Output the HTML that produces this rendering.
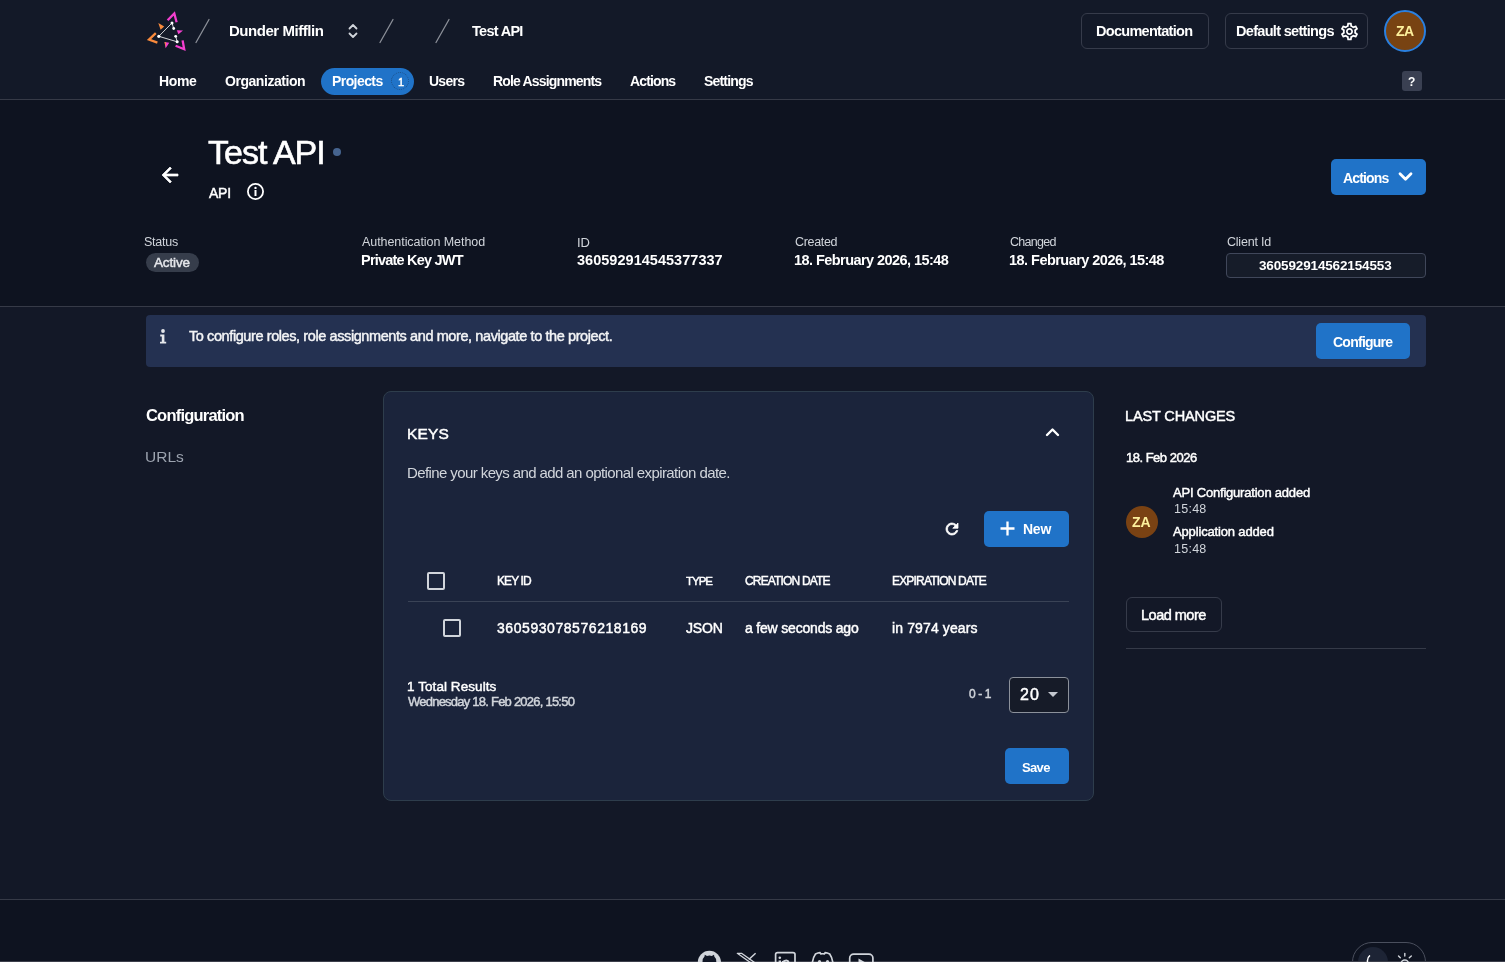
<!DOCTYPE html>
<html><head><meta charset="utf-8"><style>
*{box-sizing:border-box;margin:0;padding:0}
html,body{width:1505px;height:962px;overflow:hidden}
body{background:#0e1320;font-family:"Liberation Sans",sans-serif;color:#fff;position:relative}
.a{position:absolute}
.bo{position:absolute;border:1px solid #363b4a;border-radius:6px}
.pb{position:absolute;background:#2073c8;border-radius:5px}

.t{position:absolute;white-space:nowrap;will-change:transform}
</style></head><body style="">
<div class="a" style="left:0;top:0;width:1505px;height:99px;background:#131928"></div>
<div class="a" style="left:0;top:99px;width:1505px;height:1px;background:#363a47"></div>
<div class="a" style="left:0;top:307px;width:1505px;height:592px;background:#131827"></div>
<!-- breadcrumb slashes -->
<svg class="a" style="left:0;top:0" width="1505" height="60">
 <g stroke="#8b8f98" stroke-width="1.3" stroke-linecap="round">
  <line x1="209" y1="19.5" x2="196" y2="42.5"/>
  <line x1="393" y1="19.5" x2="380" y2="42.5"/>
  <line x1="449" y1="19.5" x2="436" y2="42.5"/>
 </g>
 <g stroke="#d1d5db" stroke-width="1.8" fill="none" stroke-linecap="round" stroke-linejoin="round">
  <polyline points="349.5,28.5 353,25 356.5,28.5"/>
  <polyline points="349.5,33.5 353,37 356.5,33.5"/>
 </g>
</svg>
<div class="bo" style="left:1081px;top:13px;width:128px;height:36px"></div>
<div class="bo" style="left:1225px;top:13px;width:143px;height:36px"></div>
<div class="a" style="left:1384px;top:10px;width:42px;height:42px;border-radius:50%;background:#784312;border:2px solid #2a80e0"></div>
<div class="a" style="left:321px;top:68px;width:93px;height:27px;border-radius:14px;background:#2073c8"></div>
<div class="a" style="left:391px;top:72px;width:18px;height:18px;border-radius:50%;background:transparent;border:1.5px dotted #1d4f88"></div>
<div class="a" style="left:1402px;top:71px;width:20px;height:20px;border-radius:3px;background:#3a4052"></div>

<div class="a" style="left:333px;top:148px;width:8px;height:8px;border-radius:50%;background:#46648f"></div>
<svg class="a" style="left:158px;top:163px" width="24" height="24" viewBox="0 0 24 24"><path d="M20 11H7.83l5.59-5.59L12 4l-8 8 8 8 1.41-1.41L7.83 13H20v-2z" fill="#fff" stroke="#fff" stroke-width="0.7"/></svg>
<svg class="a" style="left:246px;top:182px" width="19" height="19" viewBox="0 0 19 19"><circle cx="9.5" cy="9.5" r="7.6" fill="none" stroke="#fff" stroke-width="1.8"/><circle cx="9.5" cy="5.9" r="1.2" fill="#fff"/><rect x="8.5" y="8" width="2" height="6" fill="#fff"/></svg>

<div class="pb" style="left:1331px;top:159px;width:95px;height:36px"></div>
<svg class="a" style="left:1397px;top:170px" width="17" height="13" viewBox="0 0 17 13"><polyline points="3,3.8 8.5,9.3 14,3.8" fill="none" stroke="#fff" stroke-width="2.8" stroke-linecap="round" stroke-linejoin="round"/></svg>

<div class="a" style="left:146px;top:253px;width:53px;height:19px;border-radius:10px;background:#363d4b"></div>
<div class="a" style="left:1226px;top:253px;width:200px;height:25px;border-radius:4px;background:#161c29;border:1px solid #40475a"></div>

<div class="a" style="left:0;top:306px;width:1505px;height:1px;background:#363a47"></div>
<div class="a" style="left:146px;top:315px;width:1280px;height:52px;background:#243151;border-radius:4px"></div>
<div class="pb" style="left:1316px;top:323px;width:94px;height:36px"></div>

<div class="a" style="left:383px;top:391px;width:711px;height:410px;background:#1b243b;border:1px solid #2e3d4c;border-radius:8px"></div>
<svg class="a" style="left:1043px;top:424px" width="19" height="15" viewBox="0 0 19 15"><polyline points="4,11 9.5,5.5 15,11" fill="none" stroke="#fff" stroke-width="2.4" stroke-linecap="round" stroke-linejoin="round"/></svg>
<svg class="a" style="left:943px;top:520px" width="18" height="18" viewBox="0 0 24 24"><path d="M17.65 6.35A7.958 7.958 0 0 0 12 4c-4.42 0-7.99 3.58-7.99 8s3.57 8 7.99 8c3.73 0 6.84-2.55 7.73-6h-2.08A5.99 5.99 0 0 1 12 18c-3.31 0-6-2.69-6-6s2.69-6 6-6c1.66 0 3.14.69 4.22 1.78L13 11h7V4l-2.35 2.35z" fill="#fff" stroke="#fff" stroke-width="1"/></svg>
<div class="pb" style="left:984px;top:511px;width:85px;height:36px"></div>
<svg class="a" style="left:999px;top:520px" width="17" height="17" viewBox="0 0 17 17"><path d="M8.5 1.5v14M1.5 8.5h14" stroke="#fff" stroke-width="2.3"/></svg>

<div class="a" style="left:427px;top:572px;width:18px;height:18px;border:2px solid #d1d5db;border-radius:2px"></div>
<div class="a" style="left:408px;top:601px;width:661px;height:1px;background:#3a4356"></div>
<div class="a" style="left:443px;top:619px;width:18px;height:18px;border:2px solid #d1d5db;border-radius:2px"></div>

<div class="a" style="left:1009px;top:677px;width:60px;height:36px;border-radius:4px;background:#161b28;border:1px solid #8c919b"></div>
<svg class="a" style="left:1047px;top:691px" width="12" height="7" viewBox="0 0 12 7"><polygon points="1,1 11,1 6,6" fill="#c3c7cf"/></svg>
<div class="pb" style="left:1005px;top:748px;width:64px;height:36px"></div>

<div class="a" style="left:1126px;top:506px;width:32px;height:32px;border-radius:50%;background:#7a4213"></div>
<div class="bo" style="left:1126px;top:597px;width:96px;height:35px"></div>
<div class="a" style="left:1126px;top:648px;width:300px;height:1px;background:#353a48"></div>

<div class="a" style="left:0;top:899px;width:1505px;height:1px;background:#363a47"></div>
<div class="a" style="left:1352px;top:942px;width:74px;height:40px;border-radius:20px;border:1px solid #4a4f5d"></div>
<div class="a" style="left:1358px;top:947px;width:30px;height:30px;border-radius:50%;background:#1d2435"></div>
<div class="a" style="left:0;top:961px;width:1505px;height:1px;background:#3c3f4b"></div>
<!-- logo -->
<svg class="a" style="left:0;top:0" width="200" height="60" viewBox="0 0 200 60">
 <g fill="none" stroke-linejoin="miter" stroke-linecap="butt">
  <polyline points="167.6,20.2 174.3,13.4 176.6,22.3" stroke="#f43fcf" stroke-width="2.3"/>
  <polyline points="155.8,33.2 149,39.6 157.4,42.6" stroke="#f98a3c" stroke-width="2.3"/>
  <polyline points="175.6,45.8 184.2,49.2 182.6,40.4" stroke="#f43fcf" stroke-width="2.3"/>
 </g>
 <polygon points="158.3,23 164.2,26.6 160.6,29.8" fill="#f98a3c"/>
 <polygon points="176.8,30.3 183,30.5 178.4,34.2" fill="#f43fcf"/>
 <polygon points="164.6,42 169.3,42.7 165.6,48.2" fill="#f43fcf"/>
 <polygon points="164.6,42 166,42.2 165.4,47.6" fill="#f98a3c"/>
 <g stroke="#e5e7eb" stroke-width="0.9">
  <line x1="172" y1="23" x2="158.8" y2="36.3"/>
  <line x1="158.8" y1="36.3" x2="177.2" y2="41.8"/>
  <line x1="172" y1="23" x2="173.7" y2="28.5"/>
  <line x1="175.7" y1="36.3" x2="177.2" y2="41.8"/>
 </g>
 <g fill="#fff">
  <circle cx="172" cy="23" r="1.5"/><circle cx="173.7" cy="28.5" r="1.4"/><circle cx="158.8" cy="36.3" r="1.6"/><circle cx="175.7" cy="36.3" r="1.4"/><circle cx="177.2" cy="41.8" r="1.5"/>
 </g>
</svg>
<!-- gear -->
<svg class="a" style="left:1338.7px;top:20.7px" width="21" height="21" viewBox="0 0 24 24"><path fill="#fff" d="M19.43 12.98c.04-.32.07-.64.07-.98 0-.34-.03-.66-.07-.98l2.11-1.65c.19-.15.24-.42.12-.64l-2-3.46a.5.5 0 0 0-.61-.22l-2.49 1c-.52-.4-1.08-.73-1.690-.98l-.38-2.65A.488.488 0 0 0 14 2h-4c-.25 0-.46.18-.49.42l-.38 2.65c-.61.25-1.170.59-1.69.98l-2.49-1a.566.566 0 0 0-.18-.03c-.17 0-.34.09-.43.25l-2 3.46c-.13.22-.07.49.12.64l2.11 1.65c-.04.32-.07.65-.07.98 0 .33.03.66.07.98l-2.11 1.65c-.19.15-.24.42-.12.64l2 3.46a.5.5 0 0 0 .61.22l2.49-1c.52.4 1.08.73 1.69.98l.38 2.65c.03.24.24.42.49.42h4c.25 0 .46-.18.49-.42l.38-2.65c.61-.25 1.17-.59 1.69-.98l2.49 1c.06.02.12.03.18.03.17 0 .34-.09.43-.25l2-3.46c.12-.22.07-.49-.12-.64l-2.11-1.65zm-1.98-1.71c.04.31.05.52.05.73 0 .21-.02.43-.05.73l-.14 1.13.89.7 1.08.84-.7 1.21-1.27-.51-1.04-.42-.9.68c-.43.32-.84.56-1.25.73l-1.06.43-.16 1.13-.2 1.35h-1.4l-.19-1.35-.16-1.130-1.06-.43c-.43-.18-.83-.41-1.23-.71l-.91-.7-1.06.43-1.27.51-.7-1.21 1.08-.84.89-.7-.14-1.13c-.03-.31-.05-.54-.05-.74s.02-.43.05-.73l.14-1.13-.89-.7-1.08-.84.7-1.21 1.27.51 1.04.42.9-.68c.43-.32.84-.56 1.25-.73l1.06-.43.16-1.13.2-1.35h1.39l.19 1.35.16 1.13 1.06.43c.43.18.83.41 1.23.71l.91.7 1.06-.43 1.27-.51.7 1.21-1.07.85-.89.7.14 1.13zM12 8c-2.21 0-4 1.79-4 4s1.79 4 4 4 4-1.790 4-4-1.79-4-4-4zm0 6c-1.1 0-2-.9-2-2s.9-2 2-2 2 .9 2 2-.9 2-2 2z"/></svg>
<!-- banner info glyph -->
<svg class="a" style="left:155px;top:326px" width="16" height="20" viewBox="0 0 16 20">
 <circle cx="8" cy="5" r="1.9" fill="#e5e7eb"/>
 <path d="M5.2 8.5h4.2v7.2h1.8v1.9H5v-1.9h1.8v-5.3H5.2z" fill="#e5e7eb"/>
</svg>
<!-- footer icons -->
<svg class="a" style="left:680px;top:940px" width="220" height="22" viewBox="680 940 220 22">
 <circle cx="709.4" cy="962.4" r="11.6" fill="#d1d5db"/>
 <path d="M702.5 962 q0-4 2-5.5 l0.3-1.8 2.2 1.2 q2.4-0.6 4.8 0 l2.2-1.2 0.3 1.8 q2 1.5 2 5.5z" fill="#111726"/>
 <path d="M737.3 953.3 h4.2 l13.5 9.5 h-4.2z" stroke="#d1d5db" stroke-width="1.3" fill="none" stroke-linejoin="round"/>
 <path d="M755.6 953.2 l-6.8 6.3" stroke="#d1d5db" stroke-width="1.5" fill="none"/>
 <rect x="775.6" y="952.6" width="19.4" height="14" rx="2" fill="none" stroke="#d1d5db" stroke-width="1.7"/>
 <circle cx="779.8" cy="957.8" r="1.3" fill="#d1d5db"/>
 <rect x="778.6" y="960.5" width="2.4" height="3" fill="#d1d5db"/>
 <path d="M783 961v3 M783.2 961.8 q1.3-1.3 3.2-1.3 q2.2 0 2.2 2.5v1" stroke="#d1d5db" stroke-width="2" fill="none"/>
 <path d="M812 966 q0.5-8 3.5-12 q2.5-1.2 4.5-1.3 l0.8 1.2 q1.8-0.3 3.6 0 l0.8-1.2 q2 0.1 4.5 1.3 q3 4 3.5 12" stroke="#d1d5db" stroke-width="1.7" fill="none"/>
 <circle cx="819.5" cy="961.5" r="1.6" fill="#d1d5db"/><circle cx="827.5" cy="961.5" r="1.6" fill="#d1d5db"/>
 <rect x="849.7" y="954.1" width="23.2" height="16" rx="4" fill="none" stroke="#d1d5db" stroke-width="1.7"/>
 <path d="M858.5 958.5 l7 4 -7 4z" fill="#d1d5db"/>
</svg>
<!-- sun -->
<svg class="a" style="left:1390px;top:950px" width="30" height="12" viewBox="1390 950 30 12">
 <g stroke="#d1d5db" stroke-width="1.4" stroke-linecap="round">
  <line x1="1404.8" y1="953.5" x2="1404.8" y2="956"/>
  <line x1="1398.5" y1="956" x2="1400.3" y2="957.8"/>
  <line x1="1411.3" y1="956" x2="1409.3" y2="957.8"/>
 </g>
 <circle cx="1404.8" cy="963.5" r="3.6" fill="none" stroke="#d1d5db" stroke-width="1.5"/>
</svg>
<svg class="a" style="left:1365px;top:955px" width="12" height="7" viewBox="0 0 12 7"><path d="M5 0.5 q-3 2 -2.5 6.5" stroke="#fff" stroke-width="1.5" fill="none"/></svg>

<div id="t_dm" class="t" style="left:228.60px;top:20.90px;font-size:15px;line-height:19px;font-weight:bold;letter-spacing:-0.462px;color:#ffffff;">Dunder Mifflin</div>
<div id="t_tapi" class="t" style="left:472.00px;top:21.90px;font-size:14.5px;line-height:19px;font-weight:bold;letter-spacing:-0.714px;color:#ffffff;">Test API</div>
<div id="t_doc" class="t" style="left:1096.00px;top:22.10px;font-size:14.5px;line-height:19px;font-weight:bold;letter-spacing:-0.708px;color:#ffffff;">Documentation</div>
<div id="t_ds" class="t" style="left:1236.00px;top:22.30px;font-size:14.5px;line-height:19px;font-weight:bold;letter-spacing:-0.683px;color:#ffffff;">Default settings</div>
<div id="t_za1" class="t" style="left:1395.50px;top:22.00px;font-size:14px;line-height:18px;font-weight:bold;letter-spacing:-0.500px;color:#fdf09c;">ZA</div>
<div id="n_home" class="t" style="left:158.60px;top:72.00px;font-size:14.0px;line-height:18px;font-weight:bold;letter-spacing:-0.333px;color:#ffffff;">Home</div>
<div id="n_org" class="t" style="left:225.00px;top:72.00px;font-size:14.0px;line-height:18px;font-weight:bold;letter-spacing:-0.455px;color:#ffffff;">Organization</div>
<div id="n_proj" class="t" style="left:332.40px;top:72.00px;font-size:14.0px;line-height:18px;font-weight:bold;letter-spacing:-0.571px;color:#ffffff;">Projects</div>
<div id="n_one" class="t" style="left:398.00px;top:75.00px;font-size:11.0px;line-height:14px;font-weight:normal;-webkit-text-stroke:0.45px currentColor;letter-spacing:0.000px;color:#ffffff;">1</div>
<div id="n_users" class="t" style="left:429.00px;top:72.00px;font-size:14.0px;line-height:18px;font-weight:bold;letter-spacing:-0.750px;color:#ffffff;">Users</div>
<div id="n_role" class="t" style="left:492.50px;top:72.00px;font-size:14.0px;line-height:18px;font-weight:bold;letter-spacing:-0.833px;color:#ffffff;">Role Assignments</div>
<div id="n_act" class="t" style="left:630.00px;top:72.00px;font-size:14.0px;line-height:18px;font-weight:bold;letter-spacing:-0.875px;color:#ffffff;">Actions</div>
<div id="n_set" class="t" style="left:704.00px;top:72.00px;font-size:14.0px;line-height:18px;font-weight:bold;letter-spacing:-0.821px;color:#ffffff;">Settings</div>
<div id="n_q" class="t" style="left:1408.40px;top:75.10px;font-size:12px;line-height:15px;font-weight:bold;letter-spacing:0.000px;color:#ffffff;">?</div>
<div id="h_title" class="t" style="left:208.40px;top:131.30px;font-size:34px;line-height:43px;font-weight:normal;letter-spacing:-1.000px;color:#ffffff;-webkit-text-stroke:0.6px #fff">Test API</div>
<div id="h_api" class="t" style="left:209.40px;top:184.40px;font-size:14.0px;line-height:18px;font-weight:normal;-webkit-text-stroke:0.45px currentColor;letter-spacing:-0.250px;color:#ffffff;">API</div>
<div id="b_actions" class="t" style="left:1343.00px;top:168.70px;font-size:14px;line-height:18px;font-weight:bold;letter-spacing:-0.833px;color:#ffffff;">Actions</div>
<div id="l_status" class="t" style="left:144.00px;top:233.50px;font-size:12.5px;line-height:16px;font-weight:normal;letter-spacing:-0.250px;color:#d1d5db;">Status</div>
<div id="l_auth" class="t" style="left:361.50px;top:233.50px;font-size:12.5px;line-height:16px;font-weight:normal;letter-spacing:-0.062px;color:#d1d5db;">Authentication Method</div>
<div id="l_id" class="t" style="left:577.00px;top:233.50px;font-size:13px;line-height:17px;font-weight:normal;letter-spacing:0.000px;color:#d1d5db;">ID</div>
<div id="l_created" class="t" style="left:794.50px;top:233.50px;font-size:12.5px;line-height:16px;font-weight:normal;letter-spacing:-0.333px;color:#d1d5db;">Created</div>
<div id="l_changed" class="t" style="left:1010.00px;top:233.50px;font-size:12.5px;line-height:16px;font-weight:normal;letter-spacing:-0.708px;color:#d1d5db;">Changed</div>
<div id="l_client" class="t" style="left:1226.50px;top:233.50px;font-size:12.5px;line-height:16px;font-weight:normal;letter-spacing:-0.219px;color:#d1d5db;">Client Id</div>
<div id="v_auth" class="t" style="left:360.50px;top:250.50px;font-size:14.5px;line-height:19px;font-weight:bold;letter-spacing:-0.786px;color:#ffffff;">Private Key JWT</div>
<div id="v_id" class="t" style="left:577.00px;top:250.50px;font-size:14.5px;line-height:19px;font-weight:bold;letter-spacing:0.029px;color:#ffffff;">360592914545377337</div>
<div id="v_created" class="t" style="left:793.50px;top:250.50px;font-size:14.5px;line-height:19px;font-weight:bold;letter-spacing:-0.554px;color:#ffffff;">18. February 2026, 15:48</div>
<div id="v_changed" class="t" style="left:1009.00px;top:250.50px;font-size:14.5px;line-height:19px;font-weight:bold;letter-spacing:-0.533px;color:#ffffff;">18. February 2026, 15:48</div>
<div id="v_active" class="t" style="left:153.50px;top:254.00px;font-size:13.5px;line-height:17px;font-weight:normal;-webkit-text-stroke:0.45px currentColor;letter-spacing:-0.150px;color:#e5e7eb;">Active</div>
<div id="v_client" class="t" style="left:1259.00px;top:256.50px;font-size:13.5px;line-height:17px;font-weight:bold;letter-spacing:-0.147px;color:#ffffff;">360592914562154553</div>
<div id="bn_text" class="t" style="left:189.00px;top:326.50px;font-size:14.5px;line-height:19px;font-weight:normal;-webkit-text-stroke:0.45px currentColor;letter-spacing:-0.407px;color:#f3f4f6;">To configure roles, role assignments and more, navigate to the project.</div>
<div id="bn_conf" class="t" style="left:1333.00px;top:332.50px;font-size:14px;line-height:18px;font-weight:bold;letter-spacing:-0.750px;color:#ffffff;">Configure</div>
<div id="s_conf" class="t" style="left:146.20px;top:405.10px;font-size:16.5px;line-height:21px;font-weight:bold;letter-spacing:-0.792px;color:#ffffff;">Configuration</div>
<div id="s_urls" class="t" style="left:144.80px;top:446.50px;font-size:15.5px;line-height:20px;font-weight:normal;letter-spacing:-0.000px;color:#9ca3af;">URLs</div>
<div id="k_title" class="t" style="left:407.00px;top:424.00px;font-size:15.5px;line-height:20px;font-weight:normal;-webkit-text-stroke:0.45px currentColor;letter-spacing:0.167px;color:#ffffff;">KEYS</div>
<div id="k_desc" class="t" style="left:407.00px;top:463.00px;font-size:15.0px;line-height:19px;font-weight:normal;letter-spacing:-0.596px;color:#d1d5db;">Define your keys and add an optional expiration date.</div>
<div id="k_new" class="t" style="left:1023.00px;top:520.20px;font-size:14.0px;line-height:18px;font-weight:bold;letter-spacing:-0.250px;color:#ffffff;">New</div>
<div id="th_id" class="t" style="left:496.80px;top:573.80px;font-size:12.0px;line-height:15px;font-weight:normal;-webkit-text-stroke:0.45px currentColor;letter-spacing:-0.900px;color:#ffffff;">KEY ID</div>
<div id="th_type" class="t" style="left:685.60px;top:573.80px;font-size:11.5px;line-height:15px;font-weight:normal;-webkit-text-stroke:0.45px currentColor;letter-spacing:-1.000px;color:#ffffff;">TYPE</div>
<div id="th_cd" class="t" style="left:744.60px;top:573.80px;font-size:12.0px;line-height:15px;font-weight:normal;-webkit-text-stroke:0.45px currentColor;letter-spacing:-0.833px;color:#ffffff;">CREATION DATE</div>
<div id="th_ed" class="t" style="left:891.60px;top:573.80px;font-size:12.0px;line-height:15px;font-weight:normal;-webkit-text-stroke:0.45px currentColor;letter-spacing:-0.821px;color:#ffffff;">EXPIRATION DATE</div>
<div id="td_id" class="t" style="left:496.80px;top:618.60px;font-size:14.0px;line-height:18px;font-weight:normal;-webkit-text-stroke:0.45px currentColor;letter-spacing:0.559px;color:#ffffff;">360593078576218169</div>
<div id="td_type" class="t" style="left:685.60px;top:619.20px;font-size:14.0px;line-height:18px;font-weight:normal;-webkit-text-stroke:0.45px currentColor;letter-spacing:-0.167px;color:#ffffff;">JSON</div>
<div id="td_cd" class="t" style="left:744.60px;top:619.20px;font-size:14.0px;line-height:18px;font-weight:normal;-webkit-text-stroke:0.45px currentColor;letter-spacing:-0.188px;color:#ffffff;">a few seconds ago</div>
<div id="td_ed" class="t" style="left:891.60px;top:619.20px;font-size:14.0px;line-height:18px;font-weight:normal;-webkit-text-stroke:0.45px currentColor;letter-spacing:0.125px;color:#ffffff;">in 7974 years</div>
<div id="f_total" class="t" style="left:406.80px;top:677.70px;font-size:13.5px;line-height:17px;font-weight:normal;-webkit-text-stroke:0.45px currentColor;letter-spacing:0.071px;color:#ffffff;">1 Total Results</div>
<div id="f_date" class="t" style="left:407.80px;top:693.00px;font-size:13.0px;line-height:17px;font-weight:normal;-webkit-text-stroke:0.45px currentColor;letter-spacing:-0.768px;color:#d1d5db;">Wednesday 18. Feb 2026, 15:50</div>
<div id="f_range" class="t" style="left:969.20px;top:687.00px;font-size:12.0px;line-height:15px;font-weight:normal;-webkit-text-stroke:0.45px currentColor;letter-spacing:-0.375px;color:#d1d5db;">0 - 1</div>
<div id="f_20" class="t" style="left:1019.60px;top:684.80px;font-size:16px;line-height:20px;font-weight:normal;-webkit-text-stroke:0.45px currentColor;letter-spacing:1.000px;color:#ffffff;">20</div>
<div id="f_save" class="t" style="left:1022.40px;top:759.40px;font-size:13px;line-height:17px;font-weight:bold;letter-spacing:-0.667px;color:#ffffff;">Save</div>
<div id="r_title" class="t" style="left:1124.80px;top:406.50px;font-size:14.5px;line-height:19px;font-weight:normal;-webkit-text-stroke:0.45px currentColor;letter-spacing:-0.136px;color:#ffffff;">LAST CHANGES</div>
<div id="r_date" class="t" style="left:1126.00px;top:449.40px;font-size:13.0px;line-height:17px;font-weight:normal;-webkit-text-stroke:0.45px currentColor;letter-spacing:-0.500px;color:#ffffff;">18. Feb 2026</div>
<div id="r_za" class="t" style="left:1131.80px;top:512.80px;font-size:14px;line-height:18px;font-weight:bold;letter-spacing:0.000px;color:#fdf09c;">ZA</div>
<div id="r_c1" class="t" style="left:1173.00px;top:484.00px;font-size:13.0px;line-height:17px;font-weight:normal;-webkit-text-stroke:0.45px currentColor;letter-spacing:-0.205px;color:#ffffff;">API Configuration added</div>
<div id="r_t1" class="t" style="left:1173.60px;top:500.70px;font-size:12.5px;line-height:16px;font-weight:normal;letter-spacing:0.250px;color:#d1d5db;">15:48</div>
<div id="r_c2" class="t" style="left:1173.00px;top:523.20px;font-size:13.0px;line-height:17px;font-weight:normal;-webkit-text-stroke:0.45px currentColor;letter-spacing:-0.156px;color:#ffffff;">Application added</div>
<div id="r_t2" class="t" style="left:1173.60px;top:540.50px;font-size:12.5px;line-height:16px;font-weight:normal;letter-spacing:0.250px;color:#d1d5db;">15:48</div>
<div id="r_load" class="t" style="left:1140.60px;top:606.40px;font-size:14.5px;line-height:19px;font-weight:normal;-webkit-text-stroke:0.45px currentColor;letter-spacing:-0.500px;color:#ffffff;">Load more</div>
</body></html>
